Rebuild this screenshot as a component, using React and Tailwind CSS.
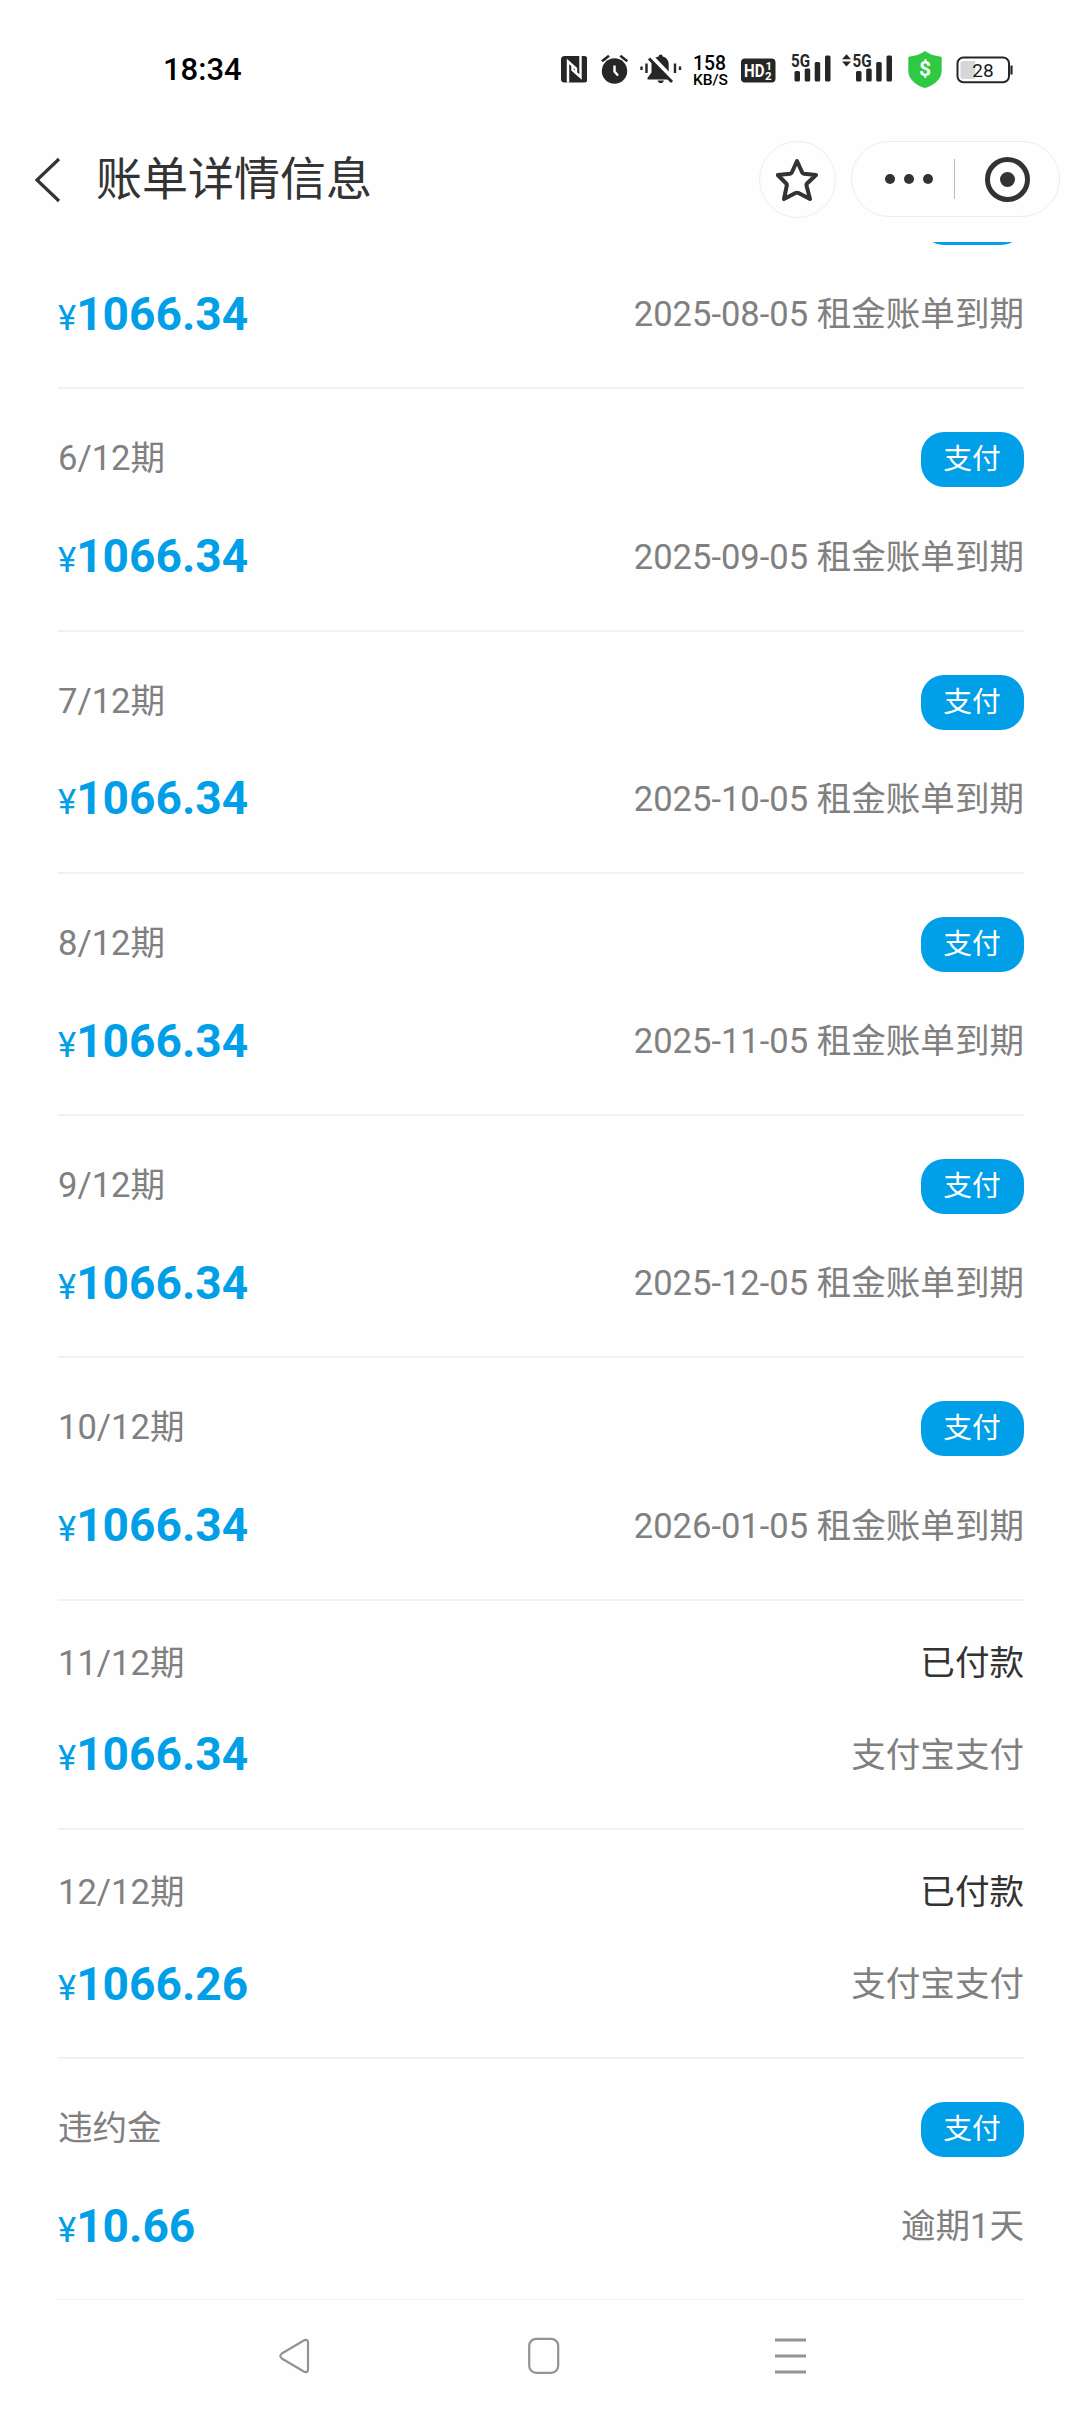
const FONT = "font-['Roboto','Noto_Sans_CJK_SC',sans-serif]";

const bills = [
  { amount: '1066.34', note: '2025-08-05 租金账单到期', scrolled: true },
  { label: '6/12期', amount: '1066.34', note: '2025-09-05 租金账单到期' },
  { label: '7/12期', amount: '1066.34', note: '2025-10-05 租金账单到期' },
  { label: '8/12期', amount: '1066.34', note: '2025-11-05 租金账单到期' },
  { label: '9/12期', amount: '1066.34', note: '2025-12-05 租金账单到期' },
  { label: '10/12期', amount: '1066.34', note: '2026-01-05 租金账单到期' },
  { label: '11/12期', amount: '1066.34', note: '支付宝支付', paid: true },
  { label: '12/12期', amount: '1066.26', note: '支付宝支付', paid: true },
  { label: '违约金', amount: '10.66', note: '逾期1天' },
];

function NfcIcon() {
  return (
    <svg className="ml-[560.500px] h-10 w-[26.500px]" viewBox="0 0 26.5 40">
      <rect y="6" width="26.500" height="26.500" rx="3.500" fill="#262626" />
      <path d="M7 32.500V11.500L15 18.500V24M19.500 6V27L11.500 20V15" fill="none" stroke="#fff" strokeWidth="2.400" />
    </svg>
  );
}

function AlarmIcon() {
  return (
    <svg className="ml-[14px] h-10 w-7" viewBox="0 0 28 40">
      <circle cx="13.500" cy="21" r="12.700" fill="#262626" />
      <path d="M1 11.300L8 5.800M26.300 11.300L19.300 5.800" stroke="#262626" strokeWidth="2.600" />
      <path d="M13.500 15.500V21.500L17 25.500" fill="none" stroke="#fff" strokeWidth="2.400" />
    </svg>
  );
}

function MutedBellIcon() {
  return (
    <svg className="ml-[11px] h-10 w-[42px]" viewBox="0 0 42 40">
      <path d="M1.500 16.500v3.500M6.500 13.500v9.500M35 13.500v9.500M40 16.500v3.500" stroke="#262626" strokeWidth="2.400" />
      <path d="M20.700 4.500c1.300 0 1.900 .9 2 2 4 1 6 4 6 8v8l4 5.500v1.500H7.500V28l4-5.500v-8c0-4 2.400-7 7.200-8 .1-1.100 .7-2 2-2zM17.500 30.500h6.500c-.6 1.700-1.700 2.600-3.200 2.600s-2.700-.9-3.300-2.600z" fill="#262626" />
      <path d="M11.500 7.500L34 31" stroke="#fff" strokeWidth="5.500" />
      <path d="M9 8.500L32 32" stroke="#262626" strokeWidth="3" />
    </svg>
  );
}

function HdIcon() {
  return (
    <svg className={`ml-[12px] h-10 w-[35px] ${FONT}`} viewBox="0 0 35 40">
      <rect y="8.500" width="34.500" height="24" rx="4" fill="#262626" />
      <text x="3" y="27" fontSize="18.500" fontWeight="700" fill="#fff" textLength="20.500" lengthAdjust="spacingAndGlyphs">HD</text>
      <text x="24.500" y="19.500" fontSize="11.500" fontWeight="700" fill="#fff">1</text>
      <text x="24" y="29.500" fontSize="11.500" fontWeight="700" fill="#fff">2</text>
    </svg>
  );
}

function Bars({ x }) {
  return (
    <g fill="#262626">
      <rect x={x} y="21" width="5.500" height="10.500" rx="1.500" />
      <rect x={x + 10.200} y="18.500" width="5.500" height="13" rx="1.500" />
      <rect x={x + 20.200} y="12" width="5.500" height="19.500" rx="1.500" />
      <rect x={x + 30.500} y="5.500" width="5.500" height="26" rx="1.500" />
    </g>
  );
}

function SignalIcon() {
  return (
    <svg className={`ml-[15px] h-10 w-[41px] ${FONT}`} viewBox="0 0 41 40">
      <text x="0" y="16.700" fontSize="18" fontWeight="700" fill="#262626" textLength="19" lengthAdjust="spacingAndGlyphs">5G</text>
      <Bars x={3.5} />
    </svg>
  );
}

function SignalDataIcon() {
  return (
    <svg className={`ml-[10px] h-10 w-[51px] ${FONT}`} viewBox="0 0 51 40">
      <path d="M0 9.300L4.500 4.300L9 9.300zM0 11.500L4.500 16.500L9 11.500z" fill="#262626" />
      <text x="10.500" y="16.700" fontSize="18" fontWeight="700" fill="#262626" textLength="19" lengthAdjust="spacingAndGlyphs">5G</text>
      <Bars x={14} />
    </svg>
  );
}

function ShieldIcon() {
  return (
    <svg className={`ml-[14.500px] h-10 w-[34px] ${FONT}`} viewBox="0 0 34 40">
      <path d="M17 1c4 3 9.500 5 15 5.500 1 0 1.700 .7 1.700 1.700V21c0 8-7.700 14.500-16.700 17C8 35.500 .3 29 .3 21V8.200c0-1 .7-1.700 1.700-1.700C7.500 6 13 4 17 1z" fill="#30c944" />
      <text x="17" y="26" textAnchor="middle" fontSize="21" fontWeight="700" fill="#fff">$</text>
    </svg>
  );
}

function BatteryIcon() {
  return (
    <svg className={`ml-[14px] h-10 w-[58px] ${FONT}`} viewBox="0 0 58 40">
      <rect x="1.500" y="7.500" width="51.500" height="24.800" rx="6" fill="none" stroke="#262626" strokeWidth="2" />
      <path d="M7 11h12v18H7a2.500 2.500 0 0 1-2.500-2.500v-13A2.500 2.500 0 0 1 7 11z" fill="#d6d6d6" />
      <path d="M55.500 15.500v9" stroke="#262626" strokeWidth="2.200" />
      <text x="27" y="26.500" textAnchor="middle" fontSize="19" fill="#1a1a1a">28</text>
    </svg>
  );
}

function StatusBar() {
  return (
    <div className="flex h-[140px] items-start pt-[50px]">
      <span className="ml-[163px] w-20 text-[31px] leading-10 font-medium text-black">18:34</span>
      <div className="-ml-[243px] flex">
        <NfcIcon />
        <AlarmIcon />
        <MutedBellIcon />
        <svg className={`ml-[11px] h-10 w-9 ${FONT}`} viewBox="0 0 36 40" fontWeight="500" fill="#000">
          <text x="0" y="20" fontSize="19.500" textLength="33" lengthAdjust="spacingAndGlyphs">158</text>
          <text x="0" y="35" fontSize="15.500" textLength="35" lengthAdjust="spacingAndGlyphs">KB/S</text>
        </svg>
        <HdIcon />
        <SignalIcon />
        <SignalDataIcon />
        <ShieldIcon />
        <BatteryIcon />
      </div>
    </div>
  );
}

function TitleBar() {
  return (
    <div className="flex h-[102px] items-start pl-[33px] text-[#333]">
      <svg className="mt-[17px] h-[46px] w-7" viewBox="0 0 28 46" fill="none" stroke="#333" strokeWidth="3.200">
        <path d="M26 2L4 23L26 44" />
      </svg>
      <h1 className="ml-[35px] w-[663px] text-[46px] leading-[78px]">账单详情信息</h1>
      <div className="mt-px flex size-[77px] items-center justify-center rounded-full border border-[#ededed]">
        <svg className="size-[44px]" viewBox="0 0 44 44" fill="none" stroke="#333" strokeWidth="4" strokeLinejoin="round">
          <path d="M21 3L26.300 14.800Q26.800 15.600 28 15.800L40 17L31 25.500Q30.300 26.300 30.500 27.500L34 41L22.500 35Q21 34.300 19.500 35L8 41L10.800 27.500Q11 26.300 10.200 25.500L1.800 17L14 15.800Q15.200 15.600 15.700 14.800Z" />
        </svg>
      </div>
      <div className="mt-px ml-[15px] flex h-[76px] w-[209px] items-center rounded-full border border-[#ededed]">
        <div className="ml-[33px] flex gap-[9px]">
          <i className="size-[10px] rounded-full bg-[#333]" />
          <i className="size-[10px] rounded-full bg-[#333]" />
          <i className="size-[10px] rounded-full bg-[#333]" />
        </div>
        <div className="ml-[21px] h-10 w-px bg-[#bbb]" />
        <div className="ml-[30px] flex size-[45px] items-center justify-center rounded-full border-5 border-[#333]">
          <i className="size-[15px] rounded-full bg-[#333]" />
        </div>
      </div>
    </div>
  );
}

function BillRow({ label, amount, note, paid, scrolled }) {
  return (
    <li className={`flex flex-col border-b-2 border-[#f1f1f1] pt-[43px] pb-[43px] text-[34.56px] text-[#808080] ${paid ? 'h-[229.3px]' : 'h-[242.25px]'}`}>
      <div className={`flex items-center justify-between ${paid ? 'h-[38px]' : 'h-[55px]'}`}>
        <span className={`leading-[38px] ${paid ? '' : '-mt-[3px]'}`}>{label}</span>
        {paid ? (
          <span className="leading-[38px] text-[#333]">已付款</span>
        ) : (
          <button className="h-[55px] w-[103px] rounded-[23px] bg-[#019fe8] pr-px text-[28.8px] leading-[55px] text-white">
            {scrolled ? null : '支付'}
          </button>
        )}
      </div>
      <div className="mt-auto flex h-[60px] items-center justify-between leading-[60px]">
        <span className="mt-[3px] text-[#019fe8]">
          ¥<b className="text-[46.08px] font-bold">{amount}</b>
        </span>
        <span>{note}</span>
      </div>
    </li>
  );
}

function NavBar() {
  return (
    <nav className="flex h-28 items-center pl-[278px]">
      <svg className="h-10 w-8" viewBox="0 0 32 40" fill="none" stroke="#939393" strokeWidth="2.200">
        <path d="M3.800 17.500L25.800 4.500Q29.800 2.500 30 6.500V33.500Q29.800 37.500 25.800 35.500L3.800 22.500Q.8 20 3.800 17.500Z" />
      </svg>
      <svg className="ml-[217px] h-10 w-[33px]" viewBox="0 0 33 40" fill="none" stroke="#939393" strokeWidth="2.200">
        <rect x="2.200" y="2.800" width="29" height="34" rx="7" />
      </svg>
      <svg className="ml-[214px] h-10 w-[33px]" viewBox="0 0 33 40" fill="none" stroke="#939393" strokeWidth="3">
        <path d="M1 4h31M1 20h31M1 36h31" />
      </svg>
    </nav>
  );
}

export default function App() {
  return (
    <div lang="zh-CN" className={`h-[2412px] w-[1080px] overflow-hidden bg-[#fefefe] ${FONT}`}>
      <StatusBar />
      <TitleBar />
      <main className="h-[2058px] overflow-hidden pr-14 pl-[58px]">
        <ul className="-mt-[95px]">
          {bills.map((bill) => (
            <BillRow key={bill.note + bill.label} {...bill} />
          ))}
        </ul>
      </main>
      <NavBar />
    </div>
  );
}
